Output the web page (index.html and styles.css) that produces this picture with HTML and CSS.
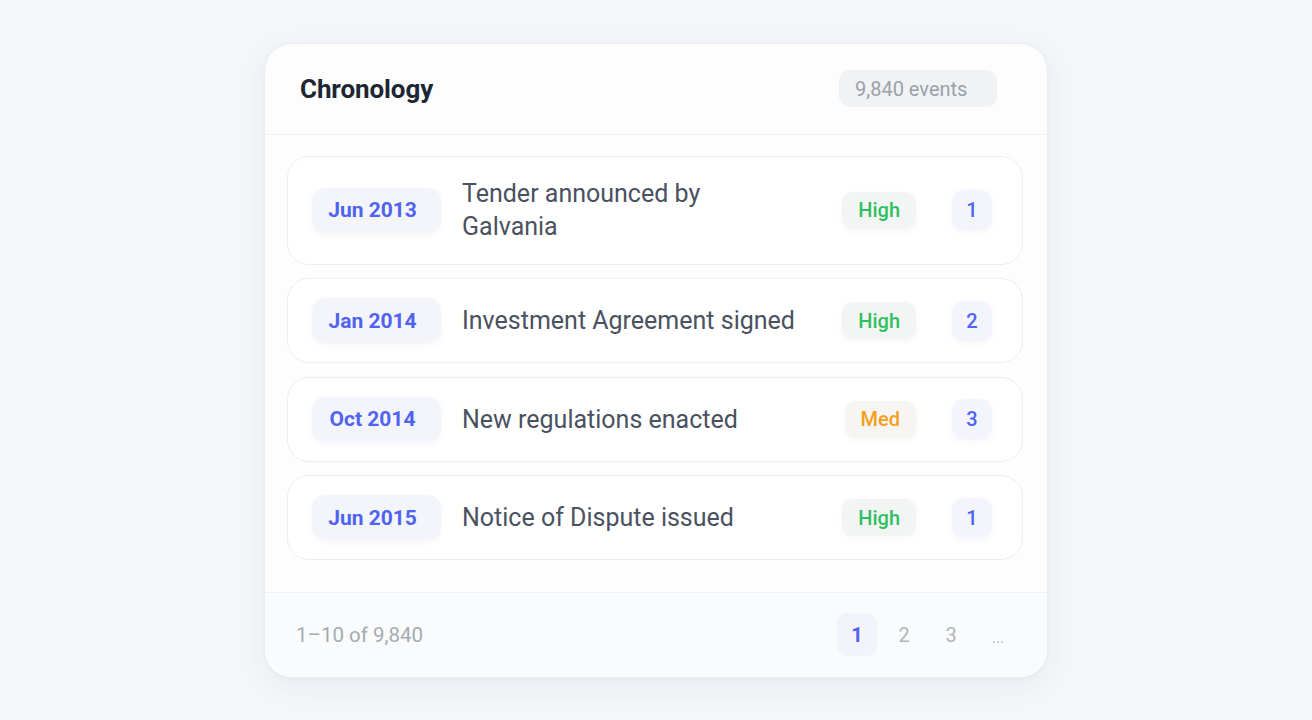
FILE: index.html
```html
<!DOCTYPE html>
<html lang="en">
<head>
<meta charset="utf-8">
<title>Chronology</title>
<link rel="stylesheet" href="styles.css">
</head>
<body>
  <main class="page">
    <section class="card">
      <header class="card-header">
        <h1 class="card-title">Chronology</h1>
        <span class="count-badge">9,840 events</span>
      </header>
      <ul class="event-list">
        <li class="event-row">
          <span class="date-chip">Jun 2013</span>
          <span class="event-title">Tender announced by Galvania</span>
          <span class="level level-high">High</span>
          <span class="num-chip">1</span>
        </li>
        <li class="event-row">
          <span class="date-chip">Jan 2014</span>
          <span class="event-title">Investment Agreement signed</span>
          <span class="level level-high">High</span>
          <span class="num-chip">2</span>
        </li>
        <li class="event-row">
          <span class="date-chip">Oct 2014</span>
          <span class="event-title">New regulations enacted</span>
          <span class="level level-med">Med</span>
          <span class="num-chip">3</span>
        </li>
        <li class="event-row">
          <span class="date-chip">Jun 2015</span>
          <span class="event-title">Notice of Dispute issued</span>
          <span class="level level-high">High</span>
          <span class="num-chip">1</span>
        </li>
      </ul>
      <footer class="card-footer">
        <span class="range">1–10 of 9,840</span>
        <nav class="pager">
          <span class="page-item active">1</span>
          <span class="page-item">2</span>
          <span class="page-item">3</span>
          <span class="page-item dots">...</span>
        </nav>
      </footer>
    </section>
  </main>
</body>
</html>
```
FILE: styles.css
```css
* { box-sizing: border-box; }

html, body {
  margin: 0;
  padding: 0;
}

body {
  background: #f5f6fa;
  font-family: Roboto, "Liberation Sans", Arial, sans-serif;
  color: #4a5160;
}

.page {
  height: 720px;
  display: flex;
  align-items: center;
  justify-content: center;
}

.card {
  width: 784px;
  height: 635px;
  background: #fdfdfe;
  border: 1px solid #eceef3;
  border-radius: 28px;
  box-shadow: 0 8px 28px rgba(40, 50, 90, 0.06), 0 1px 3px rgba(40, 50, 90, 0.04);
  display: flex;
  flex-direction: column;
  overflow: hidden;
}

.card-header {
  height: 91px;
  flex: none;
  display: flex;
  align-items: center;
  justify-content: space-between;
  padding: 0 50px 0 35px;
  border-bottom: 1px solid #eff1f4;
}

.card-title {
  margin: 0;
  font-size: 26px;
  font-weight: 700;
  color: #1e2633;
  letter-spacing: -0.1px;
}

.count-badge {
  height: 37px;
  width: 158px;
  display: flex;
  align-items: center;
  padding-left: 16px;
  border-radius: 11px;
  background: #f1f2f4;
  color: #9ba1a9;
  font-size: 20px;
}

.event-list {
  list-style: none;
  margin: 0;
  padding: 21px 24px 0 22px;
  display: flex;
  flex-direction: column;
  gap: 13.5px;
  flex: 1;
}

.event-row {
  display: flex;
  align-items: center;
  padding: 19px 30px 19px 24px;
  background: #ffffff;
  border: 1.5px solid #eceef3;
  border-radius: 22px;
}

.date-chip {
  flex: none;
  width: 129px;
  height: 45px;
  display: flex;
  align-items: center;
  justify-content: center;
  padding-right: 8px;
  border-radius: 13px;
  background: #f4f5fb;
  box-shadow: 0 2px 6px rgba(80, 90, 160, 0.06);
  color: #4f63f0;
  font-size: 21px;
  font-weight: 700;
}

.event-title {
  width: 336px;
  margin-left: 21px;
  font-size: 25px;
  line-height: 33px;
  color: #4a5160;
}

.event-row:first-child {
  padding-top: 20.5px;
  padding-bottom: 20.5px;
}

.level {
  margin-left: auto;
  height: 37px;
  display: flex;
  align-items: center;
  padding: 0 16px;
  border-radius: 11px;
  background: #f3f5f4;
  box-shadow: 0 2px 6px rgba(60, 70, 80, 0.05);
  font-size: 20px;
  font-weight: 500;
}

.level-high { color: #2fbf5f; }
.level-med { color: #f5a01c; background: #f6f5f2; }

.num-chip {
  flex: none;
  margin-left: 36px;
  width: 40px;
  height: 40px;
  display: flex;
  align-items: center;
  justify-content: center;
  border-radius: 12px;
  background: #f4f5fc;
  box-shadow: 0 2px 6px rgba(80, 90, 160, 0.06);
  color: #4f63f0;
  font-size: 20px;
  font-weight: 500;
}

.card-footer {
  height: 85px;
  flex: none;
  display: flex;
  align-items: center;
  justify-content: space-between;
  padding: 0 29px 0 31px;
  border-top: 1.5px solid #eff1f4;
  background: #fafbfc;
}

.range {
  font-size: 20.5px;
  color: #a5abb2;
}

.pager {
  display: flex;
  align-items: center;
  gap: 7px;
}

.page-item {
  width: 40px;
  height: 43px;
  display: flex;
  align-items: center;
  justify-content: center;
  border-radius: 11px;
  font-size: 20px;
  color: #b0b5bc;
}

.page-item.active {
  background: #f3f4fb;
  color: #4f63f0;
  font-weight: 700;
}

.page-item.dots {
  font-size: 16px;
  padding-top: 6px;
}
```
